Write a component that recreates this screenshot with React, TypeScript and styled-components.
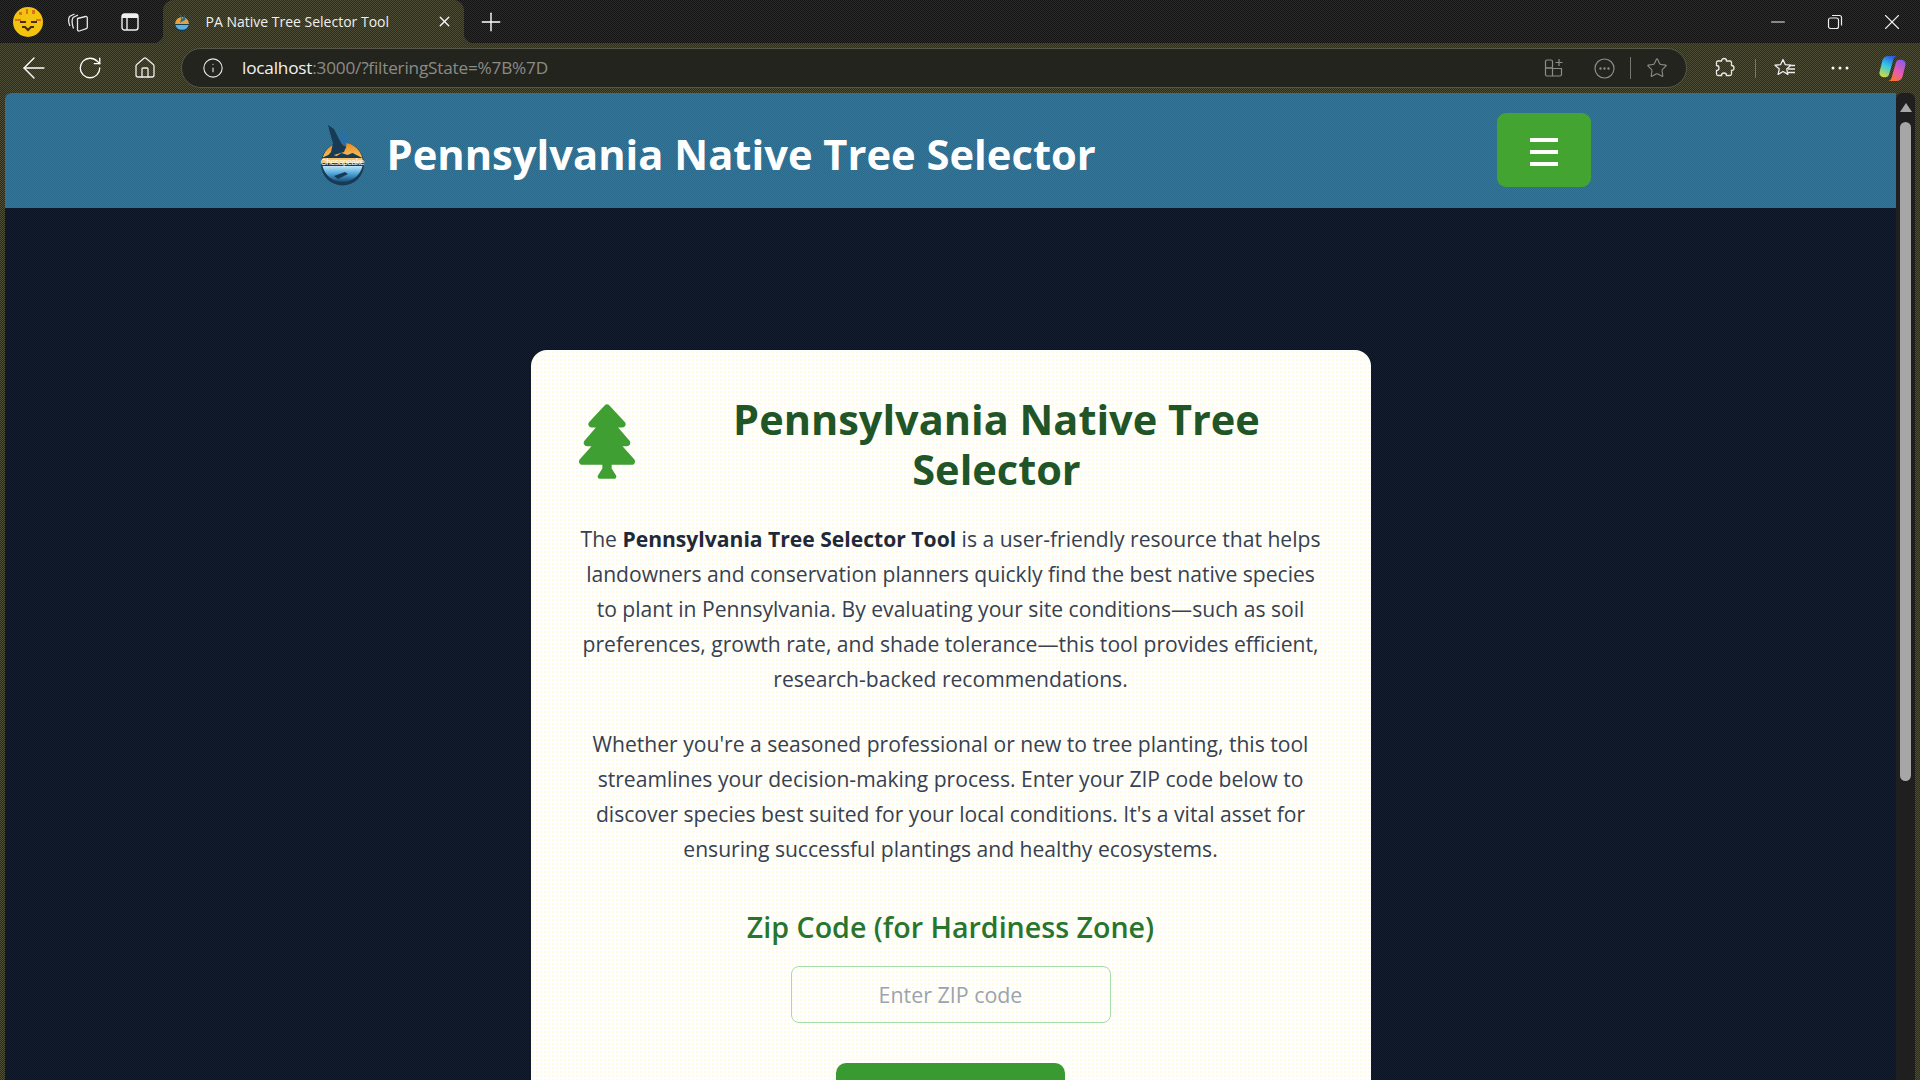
import React from "react";
import styled, { createGlobalStyle } from "styled-components";
import { FaTree } from "react-icons/fa";
import { ArrowLeft, RotateCw, Home, Info, Plus, X, Minus, Star } from "lucide-react";

const Global = createGlobalStyle`
  html, body { margin: 0; padding: 0; height: 100%; overflow: hidden; background: #3b3a2c; }
  #root { height: 100%; }
  * { box-sizing: border-box; }
`;

const ditherDark = "repeating-conic-gradient(#2a2a26 0 25%, #141414 0 50%) 0 0 / 2px 2px";
const ditherToolbar = "repeating-conic-gradient(#4c4b36 0 25%, #2d2d26 0 50%) 0 0 / 2px 2px";
const ditherHeader = "repeating-conic-gradient(#2f7a9c 0 25%, #28698c 0 50%) 0 0 / 2px 2px";
const ditherPage = "repeating-conic-gradient(#101c38 0 25%, #0b1424 0 50%) 0 0 / 2px 2px";

const Screen = styled.div`
  height: 1080px;
  width: 1920px;
  display: flex;
  flex-direction: column;
  overflow: hidden;
  font-family: "Open Sans", "Liberation Sans", sans-serif;
`;

const TabStrip = styled.div`
  height: 43px;
  flex: none;
  display: flex;
  align-items: center;
  background: ${ditherDark};
  color: #fff;
`;

const StripIcon = styled.div<{ $w: number }>`
  width: ${(p) => p.$w}px;
  flex: none;
  display: flex;
  align-items: center;
  justify-content: center;
`;

const Tab = styled.div`
  position: relative;
  width: 301px;
  height: 43px;
  flex: none;
  margin-left: 2px;
  padding: 0 11px 0 11px;
  display: flex;
  align-items: center;
  background: ${ditherToolbar};
  border-radius: 10px 10px 0 0;
  &::before, &::after {
    content: "";
    position: absolute;
    bottom: 0;
    width: 10px;
    height: 10px;
  }
  &::before { left: -10px; background: radial-gradient(circle at 0 0, transparent 10px, #3a3a2e 10.500px); }
  &::after { right: -10px; background: radial-gradient(circle at 100% 0, transparent 10px, #3a3a2e 10.500px); }
`;

const TabTitle = styled.span`
  flex: 1;
  margin-left: 15.500px;
  font-size: 14px;
  color: #f0f0f0;
  white-space: nowrap;
`;

const WindowControls = styled.div`
  margin-left: auto;
  display: flex;
  align-items: center;
`;

const WindowButton = styled.div`
  width: 57px;
  display: flex;
  align-items: center;
  justify-content: center;
`;

const Toolbar = styled.div`
  height: 50px;
  flex: none;
  display: flex;
  align-items: center;
  padding-left: 14px;
  background: ${ditherToolbar};
  color: #fff;
`;

const NavIcon = styled.div<{ $w: number }>`
  width: ${(p) => p.$w}px;
  flex: none;
  display: flex;
  align-items: center;
  justify-content: center;
`;

const AddressBar = styled.div`
  width: 1506px;
  height: 40px;
  flex: none;
  margin-left: 18px;
  margin-right: 15px;
  padding: 0 18px 0 20px;
  display: flex;
  align-items: center;
  background: #24241f;
  border: 1px solid #55554a;
  border-radius: 20px;
`;

const Url = styled.span`
  margin: 0 0 2px 18px;
  font-size: 17.200px;
  letter-spacing: -0.2px;
  color: #8b8b86;
`;

const UrlHost = styled.span`
  color: #f2f2f2;
`;

const AddressTools = styled.div`
  margin-left: auto;
  display: flex;
  align-items: center;
  color: #8d8d88;
`;

const ToolDivider = styled.div<{ $h: number; $m: string }>`
  width: 1px;
  height: ${(p) => p.$h}px;
  margin: ${(p) => p.$m};
  background: #77776e;
`;

const CopilotSlot = styled.div`
  margin-left: 13px;
  display: flex;
`;

const Viewport = styled.div`
  flex: 1;
  min-height: 0;
  display: flex;
  padding: 0 5px;
  background: ${ditherToolbar};
`;

const Page = styled.main`
  flex: 1;
  min-width: 0;
  display: flex;
  flex-direction: column;
  background: ${ditherPage};
  border-top-left-radius: 6px;
  overflow: hidden;
`;

const Header = styled.header`
  height: 115px;
  flex: none;
  background: ${ditherHeader};
`;

const HeaderInner = styled.div`
  width: 1280px;
  height: 100%;
  margin: 0 auto;
  padding-left: 8px;
  display: flex;
  align-items: center;
`;

const LogoSlot = styled.div`
  margin-top: 10px;
  display: flex;
`;

const Brand = styled.h1`
  margin: 8px 0 0 20px;
  font-size: 41.700px;
  line-height: 1.2;
  font-weight: 700;
  color: #fff;
`;

const MenuButton = styled.button`
  width: 94px;
  height: 74px;
  margin-left: auto;
  margin-top: -2px;
  padding: 5px 0 0;
  display: flex;
  flex-direction: column;
  align-items: center;
  justify-content: center;
  gap: 8.300px;
  border: none;
  border-radius: 9px;
  background: #43a431;
`;

const MenuBar = styled.span`
  width: 28px;
  height: 3.500px;
  background: #fff;
`;

const Scrollbar = styled.div`
  width: 19px;
  flex: none;
  display: flex;
  flex-direction: column;
  align-items: center;
  background: #1f1f1f;
  border-radius: 6px 6px 0 0;
`;

const ScrollArrow = styled.div`
  width: 0;
  height: 0;
  margin-top: 10px;
  border-left: 6px solid transparent;
  border-right: 6px solid transparent;
  border-bottom: 9px solid #a8a8a8;
`;

const ScrollThumb = styled.div`
  width: 11px;
  height: 659px;
  margin-top: 10px;
  border-radius: 6px;
  background: #a6a6a6;
`;

const Main = styled.div`
  flex: 1;
  padding: 142px 0 0;
  display: flex;
  justify-content: center;
`;

const Card = styled.section`
  width: 840px;
  flex: none;
  height: 900px;
  padding: 41px 47px;
  background: radial-gradient(#fffce0 0.700px, transparent 0.800px) 0 0 / 4px 4px, #ffffff;
  border-radius: 16px;
  text-align: center;
`;

const TitleRow = styled.div`
  display: flex;
  align-items: flex-start;
  gap: 35px;
  margin-bottom: 27px;
`;

const Tree = styled(FaTree)`
  width: 56px;
  height: 75px;
  flex: none;
  margin: 13px 0 0 1px;
  color: #3f9f33;
`;

const CardTitle = styled.h2`
  flex: 1;
  margin: 2.500px 0 0;
  font-size: 41.500px;
  line-height: 50px;
  font-weight: 700;
  color: #1f5527;
`;

const Paragraph = styled.p`
  margin: 0 0 30px;
  font-size: 21.100px;
  line-height: 35px;
  color: #374151;
`;

const Strong = styled.strong`
  color: #1f2937;
`;

const ZipLabel = styled.h3`
  margin: 43px 0 21px;
  font-size: 28.600px;
  line-height: 36px;
  font-weight: 600;
  color: #28752e;
`;

const ZipInput = styled.input`
  display: block;
  width: 320px;
  height: 57px;
  margin: 0 auto 40px;
  border: 1px solid #a4dcb2;
  border-radius: 8px;
  background: transparent;
  font-family: inherit;
  font-size: 21.400px;
  text-align: center;
  &::placeholder { color: #9ca3af; opacity: 1; }
`;

const SubmitButton = styled.button`
  display: block;
  width: 229px;
  height: 60px;
  margin: 0 auto;
  border: none;
  border-radius: 10px;
  background: #3a9a32;
`;

const Profile = () => (
  <svg width="30" height="30" viewBox="0 0 30 30">
    <circle cx="15" cy="15" r="15" fill="#f2c40f" />
    <g fill="#d9741a">
      <rect x="6" y="5" width="3" height="3" />
      <rect x="19" y="3" width="3" height="4" />
      <rect x="13" y="2" width="2" height="5" />
      <rect x="2" y="12" width="6" height="2" />
      <rect x="23" y="12" width="5" height="2" />
    </g>
    <path d="M7 15h6M18 15h6M9 20h3l3 3 3-3h3" stroke="#4a2c0a" strokeWidth="2" fill="none" />
  </svg>
);

const Workspaces = () => (
  <svg width="22" height="22" viewBox="0 0 22 22" fill="none" stroke="#e8e8e8" strokeWidth="1.300">
    <path d="M3 15C1.200 11 1.200 8 2.500 5.500L7.500 3" />
    <path d="M6.500 17.500C4.800 13 4.800 9 6 6.500L11 4" />
    <path d="M10.500 7.500l8-2c1-.2 1.800.4 1.800 1.300v9.500c0 .8-.4 1.200-1 1.400l-7 2.300c-1 .3-1.800-.3-1.800-1.300z" />
  </svg>
);

const TabsIcon = () => (
  <svg width="18" height="18" viewBox="0 0 18 18">
    <rect x="1" y="1" width="16" height="16" rx="2.500" fill="none" stroke="#f0f0f0" strokeWidth="1.400" />
    <path d="M1 2.500a1.500 1.500 0 0 1 1.500-1.500h13a1.500 1.500 0 0 1 1.500 1.500V5H1z" fill="#f0f0f0" />
    <path d="M6 5v12" stroke="#f0f0f0" strokeWidth="1.400" />
  </svg>
);

const Logo = () => (
  <svg width="48" height="62" viewBox="0 0 48 62">
    <defs>
      <linearGradient id="sky" x1="0" y1="0" x2="0" y2="1">
        <stop offset="0" stopColor="#e98a1f" />
        <stop offset="1" stopColor="#f8d278" />
      </linearGradient>
      <linearGradient id="water" x1="0" y1="0" x2="0" y2="1">
        <stop offset="0" stopColor="#bfe6f6" />
        <stop offset=".5" stopColor="#4aa2d6" />
        <stop offset="1" stopColor="#174a73" />
      </linearGradient>
    </defs>
    <circle cx="23.500" cy="39" r="21.500" fill="#173a55" />
    <path d="M3 38a20.500 20.500 0 0 1 41 0z" fill="url(#sky)" />
    <path d="M3.500 41a20.500 20.500 0 0 0 40 0z" fill="url(#water)" />
    <path d="M2.500 33l9-4 6 2 5-3 6 2 5-2 6 3 4 2z" fill="#173a55" />
    <path d="M20 14L24 4l4 8-1 12z" fill="#2a6ea8" />
    <path d="M9 0l6 4 6 12 3 4 3 2-2 5-10 3-8 3 5-6 2-9-3-10z" fill="#173a55" />
    <path d="M15 51l11-4 3 2-10 5z" fill="#173a55" />
    <text x="23.500" y="39.500" textAnchor="middle" fontFamily="'Liberation Sans', sans-serif" fontSize="8.500" textLength="44" fill="#fff">Chesapeake</text>
  </svg>
);

const FavIcon = () => (
  <svg width="16" height="20" viewBox="0 0 48 60">
    <circle cx="24" cy="36" r="22" fill="#173a55" />
    <path d="M3 36a21 21 0 0 1 42 0z" fill="#e9a13a" />
    <path d="M4 39a21 21 0 0 0 40 0z" fill="#5bb2dc" />
    <path d="M14 2l8 10 4 8 6-12 2 16-16 8 4-14z" fill="#2f6d8c" />
  </svg>
);

const AppsIcon = () => (
  <svg width="20" height="20" viewBox="0 0 20 20" fill="none" stroke="currentColor" strokeWidth="1.200">
    <rect x="1.500" y="2" width="7" height="8" rx="1.500" />
    <path d="M1.500 10h7v8h-5.500a1.500 1.500 0 0 1-1.500-1.500zM8.500 10.500h9v6a1.500 1.500 0 0 1-1.500 1.500h-7.500z" />
    <path d="M15 1v7M11.500 4.500h7" />
  </svg>
);

const MoreCircle = () => (
  <svg width="21" height="21" viewBox="0 0 21 21" fill="none" stroke="currentColor" strokeWidth="1.200">
    <circle cx="10.500" cy="10.500" r="9.500" />
    <circle cx="6.500" cy="10.500" r=".6" />
    <circle cx="10.500" cy="10.500" r=".6" />
    <circle cx="14.500" cy="10.500" r=".6" />
  </svg>
);

const Extensions = () => (
  <svg width="22" height="22" viewBox="0 0 22 22" fill="none" stroke="#e8e8e8" strokeWidth="1.300">
    <path d="M5 4h3.500a2.500 2.500 0 0 1 5 0H17a1.500 1.500 0 0 1 1.500 1.500V8.500a2.500 2.500 0 0 1 0 5V17a1.500 1.500 0 0 1-1.500 1.500h-3.500a2.500 2.500 0 0 0-5 0H5A1.500 1.500 0 0 1 3.500 17v-3.500a2.500 2.500 0 0 0 0-5V5.500A1.500 1.500 0 0 1 5 4z" />
  </svg>
);

const Favorites = () => (
  <svg width="22" height="20" viewBox="0 0 22 20" fill="none" stroke="#eeeeee" strokeWidth="1.300">
    <path d="M9 1.500l2.300 5.200 5.500.5-4.100 3.700 1.200 5.500-4.900-2.900-4.900 2.900 1.200-5.500L1 7.200l5.500-.5z" strokeLinejoin="round" />
    <path d="M15 7.500h6M14 11h7M13 14.500h8" />
  </svg>
);

const Copilot = () => (
  <svg width="27" height="27" viewBox="0 0 28 28">
    <defs>
      <linearGradient id="copA" x1="0.600" y1="0" x2="0.200" y2="1">
        <stop offset="0" stopColor="#2a5fe0" />
        <stop offset=".45" stopColor="#33c6e8" />
        <stop offset="1" stopColor="#d6dc3c" />
      </linearGradient>
      <linearGradient id="copB" x1="0.800" y1="0" x2="0.300" y2="1">
        <stop offset="0" stopColor="#8b5be8" />
        <stop offset=".55" stopColor="#e85bb0" />
        <stop offset="1" stopColor="#f5792a" />
      </linearGradient>
    </defs>
    <path d="M10 1h9c-2 0-3.500 1.500-4 3.500L10.500 20c-.5 2-2 3-4 3H5c-3 0-5-2.500-4.500-5l3-12C4.200 3 6.500 1 10 1z" fill="url(#copA)" />
    <path d="M18 27H9c2 0 3.500-1.500 4-3.500L17.500 8c.5-2 2-3 4-3H23c3 0 5 2.500 4.500 5l-3 12C23.800 25 21.500 27 18 27z" fill="url(#copB)" />
  </svg>
);

export default function App() {
  return (
    <Screen>
      <Global />
      <TabStrip>
        <StripIcon $w={56}><Profile /></StripIcon>
        <StripIcon $w={43}><Workspaces /></StripIcon>
        <StripIcon $w={62}><TabsIcon /></StripIcon>
        <Tab>
          <FavIcon />
          <TabTitle>PA Native Tree Selector Tool</TabTitle>
          <X size={17} color="#f0f0f0" />
        </Tab>
        <StripIcon $w={54}><Plus size={30} strokeWidth={1.100} color="#fff" /></StripIcon>
        <WindowControls>
          <WindowButton><Minus size={22} strokeWidth={1.100} color="#eee" /></WindowButton>
          <WindowButton>
            <svg width="16" height="16" viewBox="0 0 16 16" fill="none" stroke="#eee" strokeWidth="1.200"><rect x="1.500" y="4" width="10" height="10.500" rx="2" /><path d="M5 1.500h7.500a2 2 0 0 1 2 2v8" /></svg>
          </WindowButton>
          <WindowButton><X size={26} strokeWidth={1} color="#eee" /></WindowButton>
        </WindowControls>
      </TabStrip>
      <Toolbar>
        <NavIcon $w={40}><ArrowLeft size={34} strokeWidth={1} color="#fff" /></NavIcon>
        <NavIcon $w={72}><RotateCw size={26} strokeWidth={1.200} color="#fff" /></NavIcon>
        <NavIcon $w={37}><Home size={24} strokeWidth={1.300} color="#eee" /></NavIcon>
        <AddressBar>
          <Info size={22} strokeWidth={1.200} color="#e8e8e8" />
          <Url><UrlHost>localhost</UrlHost>:3000/?filteringState=%7B%7D</Url>
          <AddressTools>
            <AppsIcon />
            <ToolDivider $h={0} $m="0 14.500px" />
            <MoreCircle />
            <ToolDivider $h={22} $m="0 15px" />
            <Star size={22} strokeWidth={1.200} />
          </AddressTools>
        </AddressBar>
        <NavIcon $w={44}><Extensions /></NavIcon>
        <ToolDivider $h={19} $m="0 0 0 9px" />
        <NavIcon $w={58}><Favorites /></NavIcon>
        <NavIcon $w={52}><svg width="18" height="4" viewBox="0 0 18 4" fill="#fff"><circle cx="2" cy="2" r="1.500" /><circle cx="9" cy="2" r="1.500" /><circle cx="16" cy="2" r="1.500" /></svg></NavIcon>
        <CopilotSlot><Copilot /></CopilotSlot>
      </Toolbar>
      <Viewport>
        <Page>
          <Header>
            <HeaderInner>
              <LogoSlot><Logo /></LogoSlot>
              <Brand>Pennsylvania Native Tree Selector</Brand>
              <MenuButton aria-label="Menu"><MenuBar /><MenuBar /><MenuBar /></MenuButton>
            </HeaderInner>
          </Header>
          <Main>
            <Card>
              <TitleRow>
                <Tree />
                <CardTitle>Pennsylvania Native Tree Selector</CardTitle>
              </TitleRow>
              <Paragraph>
                The <Strong>Pennsylvania Tree Selector Tool</Strong> is a user-friendly resource that helps landowners and conservation planners quickly find the best native species to plant in Pennsylvania. By evaluating your site conditions—such as soil preferences, growth rate, and shade tolerance—this tool provides efficient, research-backed recommendations.
              </Paragraph>
              <Paragraph>
                Whether you're a seasoned professional or new to tree planting, this tool streamlines your decision-making process. Enter your ZIP code below to discover species best suited for your local conditions. It's a vital asset for ensuring successful plantings and healthy ecosystems.
              </Paragraph>
              <ZipLabel>Zip Code (for Hardiness Zone)</ZipLabel>
              <ZipInput placeholder="Enter ZIP code" />
              <SubmitButton aria-label="Submit" />
            </Card>
          </Main>
        </Page>
        <Scrollbar>
          <ScrollArrow />
          <ScrollThumb />
        </Scrollbar>
      </Viewport>
    </Screen>
  );
}
